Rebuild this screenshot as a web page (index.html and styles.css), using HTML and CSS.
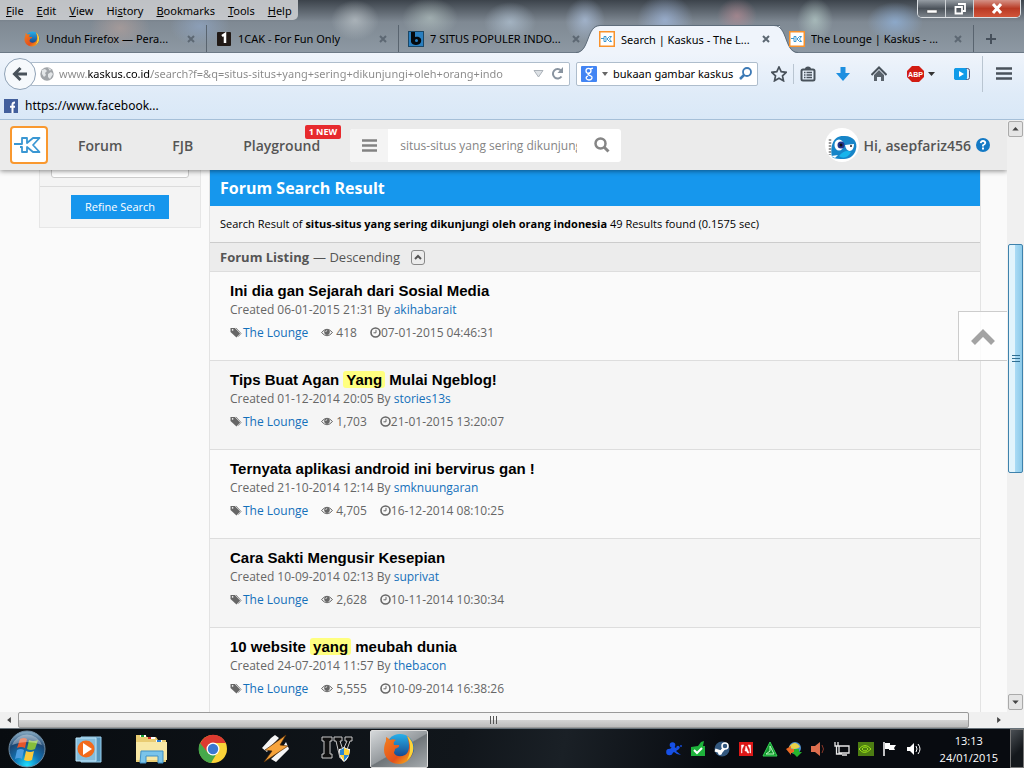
FILE: index.html
```html
<!DOCTYPE html>
<html lang="id">
<head>
<meta charset="utf-8">
<title>Search | Kaskus - The Largest Indonesian Community</title>
<meta name="viewport" content="width=device-width, initial-scale=1">
<link rel="stylesheet" href="styles.css">
</head>
<body>
<svg class="symbols" aria-hidden="true">
  <defs>
    <linearGradient id="ff-globe" x1="0" y1="0" x2="0" y2="1"><stop offset="0" stop-color="#27b0ea"/><stop offset="1" stop-color="#152f78"/></linearGradient>
    <linearGradient id="ff-fox" x1="0" y1="0" x2="1" y2="1"><stop offset="0" stop-color="#f58220"/><stop offset=".6" stop-color="#e4501b"/><stop offset="1" stop-color="#f9c61c"/></linearGradient>
    <radialGradient id="orb" cx=".5" cy=".95" r=".9"><stop offset="0" stop-color="#1fe0ff"/><stop offset=".4" stop-color="#1173b4"/><stop offset=".75" stop-color="#1c4672"/><stop offset="1" stop-color="#7fa3bd"/></radialGradient>
  </defs>
  <symbol id="i-firefox" viewBox="0 0 32 32">
    <circle cx="17" cy="15" r="14" fill="url(#ff-globe)"/>
    <path d="M24 3c5 4 7 9 6 15-1 7-7 13-14 13C8 31 1 25 1 17c0-4 1-7 2-9V4c2 1 3 2 4 3 2-1 4-1 6 0-2 1-3 3-2 5h5c1 2-2 3-4 4 0 2-1 2-1 4 2 4 7 4 11 2 5-3 5-11 2-19z" fill="url(#ff-fox)"/>
    <path d="M24 3c5 4 7 9 6 15-1 4-3 7-6 9 4-7 4-17 0-24z" fill="#fbd63a"/>
  </symbol>
  <symbol id="i-kaskus" viewBox="0 0 38 38">
    <rect x="1" y="1" width="36" height="36" rx="3" fill="#fff" stroke="#f9982f" stroke-width="2"/>
    <path d="M4 18h8v-6h5v5l6-5h6.500L23 19l6.500 7H23l-6-5v5h-5v-5h-2" fill="none" stroke="#3a97d3" stroke-width="1.800" stroke-linejoin="round"/>
  </symbol>
  <symbol id="i-kaskus-small" viewBox="0 0 16 16">
    <rect x=".75" y=".75" width="14.500" height="14.500" fill="#fff" stroke="#f9922b" stroke-width="1.500"/>
    <path d="M2 7.500h3M5 5.500h2v5H5zM12.500 5.500h-2L8 8l2.500 2.500h2L10.500 8z" fill="none" stroke="#3a97d3"/>
  </symbol>
  <symbol id="i-close" viewBox="0 0 8 8"><path d="M1 1l6 6M7 1L1 7" stroke="#5d6873" stroke-width="2"/></symbol>
  <symbol id="i-tag" viewBox="0 0 12 12"><path d="M0 1h4.800L10.500 7 6.500 11.500 0 5.500z" fill="#666"/><path d="M6 1l5.500 6-3 3.500" fill="none" stroke="#666" stroke-width=".8"/><circle cx="2.300" cy="3.200" r=".9" fill="#f9f9f9"/></symbol>
  <symbol id="i-eye" viewBox="0 0 12 10"><path d="M.5 5Q6-1.500 11.500 5 6 11.500.5 5z" fill="none" stroke="#666"/><circle cx="6" cy="4.600" r="2.800" fill="#666"/><path d="M4.700 4.500Q4.800 3 6.200 3" fill="none" stroke="#fff" stroke-width=".7"/></symbol>
  <symbol id="i-clock" viewBox="0 0 11 11"><circle cx="5.500" cy="5.500" r="4.500" fill="none" stroke="#666" stroke-width="1.600"/><path d="M6 2.800v3H3.500" fill="none" stroke="#666"/></symbol>
  <symbol id="i-up" viewBox="0 0 8 5"><path d="M4 0l4 4.500H0z" fill="#444"/></symbol>
</svg>

<div class="window">
  <header class="chrome">
    <div class="titlebar">
      <nav class="menu" aria-label="Menu bar">
        <button><u>F</u>ile</button><button><u>E</u>dit</button><button><u>V</u>iew</button><button>Hi<u>s</u>tory</button><button><u>B</u>ookmarks</button><button><u>T</u>ools</button><button><u>H</u>elp</button>
      </nav>
      <div class="controls">
        <button aria-label="Minimize"><svg width="12" height="12" viewBox="0 0 12 12"><rect x="1" y="7" width="10" height="3" fill="#fff" stroke="#555" stroke-width=".5"/></svg></button>
        <button aria-label="Restore"><svg width="12" height="12" viewBox="0 0 12 12"><path d="M4 1h7v7H9M1.500 4h6.500v6.500H1.500z" fill="none" stroke="#fff" stroke-width="1.800"/></svg></button>
        <button class="controls-close" aria-label="Close"><svg width="12" height="11" viewBox="0 0 12 11"><path d="M2 1l8 9M10 1L2 10" stroke="#fff" stroke-width="3"/></svg></button>
      </div>
    </div>
    <div class="tabs" role="tablist">
      <div class="tab tab-first" role="tab"><svg class="fav"><use href="#i-firefox"/></svg><span>Unduh Firefox — Pera...</span><button aria-label="Close tab"><svg><use href="#i-close"/></svg></button></div>
      <div class="tab" role="tab"><svg class="fav" viewBox="0 0 16 16"><rect x="1" y="1" width="14" height="14" rx="1" fill="#211915"/><path d="M6 5l3-2v9" fill="none" stroke="#fff" stroke-width="2.500"/></svg><span>1CAK - For Fun Only</span><button aria-label="Close tab"><svg><use href="#i-close"/></svg></button></div>
      <div class="tab tab-open" role="tab"><svg class="fav" viewBox="0 0 16 16"><rect width="16" height="16" fill="#1c4766"/><rect x="1" y="1" width="14" height="14" fill="#2a7fc0"/><path d="M3 1h4v5c5-1 7 2 6 5-1 4-9 4-10 0z" fill="#05090d"/><circle cx="8.500" cy="9.500" r="1.500" fill="#2a7fc0"/></svg><span>7 SITUS POPULER INDO...</span><button aria-label="Close tab"><svg><use href="#i-close"/></svg></button></div>
      <div class="tab tab-active" role="tab" aria-selected="true">
        <svg class="curve curve-left" viewBox="0 0 24 28"><path d="M0 28C14 28 10 1 24 1V28z" fill="#eff4fb"/><path d="M0 27.500C14 27 10 .5 24 .5" fill="none" stroke="#5f6d7b"/></svg>
        <svg class="fav"><use href="#i-kaskus-small"/></svg><span>Search | Kaskus - The L...</span><button aria-label="Close tab"><svg><use href="#i-close"/></svg></button>
        <svg class="curve curve-right" viewBox="0 0 24 28"><path d="M24 28C10 28 14 1 0 1V28z" fill="#eff4fb"/><path d="M24 27.500C10 27 14 .5 0 .5" fill="none" stroke="#5f6d7b"/></svg>
      </div>
      <div class="tab tab-last" role="tab"><svg class="fav"><use href="#i-kaskus-small"/></svg><span>The Lounge | Kaskus - ...</span><button aria-label="Close tab"><svg><use href="#i-close"/></svg></button></div>
      <button class="newtab" aria-label="New tab"><svg width="12" height="12" viewBox="0 0 12 12"><path d="M6 1v10M1 6h10" stroke="#46505b" stroke-width="2"/></svg></button>
    </div>
    <div class="toolbar">
      <button class="back" aria-label="Back"><svg width="16" height="16" viewBox="0 0 16 16"><path d="M15 8H3M8.500 2L2.500 8l6 6" fill="none" stroke="#49525b" stroke-width="3"/></svg></button>
      <div class="field url">
        <svg width="14" height="14" viewBox="0 0 14 14"><circle cx="7" cy="7" r="6.700" fill="#a0a4a8"/><path d="M2 3l3-1 2 2-2 2 1 2-2 2-2-3zM8 7l3-2 2 2-3 5-2-2zM8 1l3 1-1 2z" fill="#e3e6e8"/></svg>
        <input class="url-input" aria-label="Address" value="www.kaskus.co.id/search?f=&amp;q=situs-situs+yang+sering+dikunjungi+oleh+orang+indo">
        <svg width="11" height="8" viewBox="0 0 11 8"><path d="M1 .5h9L5.500 7z" fill="#dde1e5" stroke="#aab1b8"/></svg>
        <button aria-label="Reload"><svg width="13" height="13" viewBox="0 0 13 13"><path d="M10.500 9.500A4.700 4.700 0 1 1 10 3.500" fill="none" stroke="#8994a0" stroke-width="2"/><path d="M12 0v6H6.500z" fill="#8994a0"/></svg></button>
      </div>
      <div class="field find">
        <svg width="16" height="16" viewBox="0 0 16 16"><rect width="16" height="16" rx="1" fill="#4285f4"/><g fill="none" stroke="#fff" stroke-width="1.300"><circle cx="7.500" cy="4.800" r="2.500"/><path d="M9 3l3-.8M9 7c-4 1-1 2 1 3s1 4-2 4-4-3-1-4"/></g></svg>
        <svg width="6" height="4" viewBox="0 0 6 4"><path d="M0 0h6L3 4z" fill="#666"/></svg>
        <input aria-label="Search" value="bukaan gambar kaskus">
        <button aria-label="Go"><svg width="13" height="13" viewBox="0 0 13 13"><circle cx="8" cy="5" r="4" fill="none" stroke="#3c79b5" stroke-width="1.800"/><path d="M5 8L1 12" stroke="#3c79b5" stroke-width="2.500"/></svg></button>
      </div>
      <div class="tools">
        <button aria-label="Bookmark"><svg width="16" height="16" viewBox="0 0 16 16"><path d="M8 1l2.200 4.700 5 .6-3.700 3.500 1 5L8 12.300l-4.500 2.500 1-5L.8 6.300l5-.6z" fill="none" stroke="#49525b" stroke-width="1.700"/></svg></button>
        <button class="ruled list" aria-label="Bookmarks menu"><svg width="16" height="16" viewBox="0 0 16 16"><rect x="1.500" y="3.500" width="13" height="11" rx="1.500" fill="none" stroke="#49525b" stroke-width="2"/><path d="M5 3a3 2.500 0 0 1 6 0z" fill="#49525b"/><path d="M4 6.500h1.500M4 9h1.500M4 11.500h1.500M6.500 6.500H12M6.500 9H12M6.500 11.500H12" stroke="#49525b" stroke-width="1.300"/></svg></button>
        <button aria-label="Downloads"><svg width="16" height="16" viewBox="0 0 16 16"><path d="M5.500 1h5v6H15l-7 8-7-8h4.500z" fill="#1d8fe0"/></svg></button>
        <button aria-label="Home"><svg width="16" height="16" viewBox="0 0 16 16"><path d="M.5 9L8 1.500 15.500 9" fill="none" stroke="#49525b" stroke-width="2"/><path d="M3 9l5-5 5 5v6h-3v-4H6v4H3z" fill="#59626b"/></svg></button>
        <button class="abp" aria-label="Adblock Plus"><svg width="17" height="16" viewBox="0 0 17 16"><path d="M5 0h7l5 5v6l-5 5H5l-5-5V5z" fill="#d21c12"/><text x="8.500" y="11" text-anchor="middle" class="abp-text">ABP</text></svg><svg width="7" height="4" viewBox="0 0 7 4"><path d="M0 0h7L3.500 4z" fill="#333"/></svg></button>
        <button aria-label="Video"><svg width="16" height="12" viewBox="0 0 16 12"><rect x=".5" y=".5" width="15" height="11" rx="2" fill="#dcecf8" stroke="#557"/><rect width="13" height="12" rx="2" fill="#109be9"/><path d="M5 3l5 3-5 3z" fill="#fff"/></svg></button>
        <button class="ruled app" aria-label="Open menu"><svg width="16" height="13" viewBox="0 0 16 13"><path d="M0 1.500h16M0 6.500h16M0 11.500h16" stroke="#49525b" stroke-width="2.400"/></svg></button>
      </div>
    </div>
    <div class="bookmarks"><a href="#"><svg width="14" height="14" viewBox="0 0 14 14"><rect width="14" height="14" fill="#425f9c"/><path d="M8.500 14V5.500c0-1.500.8-2 2.500-2M6 7.800h5" fill="none" stroke="#fff" stroke-width="2"/></svg>https://www.facebook...</a></div>
  </header>

  <div class="viewport">
    <div class="page">
      <header class="site">
        <a class="logo" href="#" aria-label="Kaskus"><svg width="38" height="38"><use href="#i-kaskus"/></svg></a>
        <nav class="site-nav"><a href="#">Forum</a><a href="#">FJB</a><a href="#">Playground<span class="badge">1 NEW</span></a></nav>
        <form class="search">
          <button class="cats" type="button" aria-label="Categories"><svg width="15" height="13" viewBox="0 0 15 13"><path d="M0 1.500h15M0 6.500h15M0 11.500h15" stroke="#828282" stroke-width="2.500"/></svg></button>
          <input aria-label="Search Kaskus" value="situs-situs yang sering dikunjungi oleh orang indonesia">
          <button class="go" type="button" aria-label="Search"><svg width="16" height="16" viewBox="0 0 16 16"><circle cx="6.500" cy="6.500" r="5" fill="none" stroke="#858585" stroke-width="2.500"/><path d="M10.500 10.500l4 4" stroke="#858585" stroke-width="3"/></svg></button>
        </form>
        <a class="user" href="#">
          <svg width="34" height="34" viewBox="0 0 34 34"><circle cx="17" cy="17" r="17" fill="#fff"/><path d="M5 11v16" stroke="#999" stroke-width="2.500" stroke-dasharray="2 1"/><path d="M7 29C5 18 8 8 18 8c10-1 15 6 13 13-1 6-6 10-12 10-5 0-9 0-12-2z" fill="#1785c8"/><path d="M14 28c4-5 8-6 12-4-3 6-8 7-12 4z" fill="#17b4ec"/><ellipse cx="14" cy="17" rx="4.500" ry="5.500" fill="#fff"/><circle cx="16" cy="17" r="3.500" fill="#24338a"/><circle cx="16" cy="17" r="1.500" fill="#111"/><path d="M20 17l9-1c0 9-8 9-9 1z" fill="#fff"/><circle cx="26" cy="18" r="1" fill="#222"/><path d="M6 28l7-1-3 3z" fill="#fff"/></svg>
          <span>Hi, asepfariz456</span>
          <svg width="14" height="14" viewBox="0 0 14 14"><circle cx="7" cy="7" r="7" fill="#1379c4"/><path d="M4.700 5.200Q5 3 7 3t2.300 2Q9.200 6.200 7 7.300v1.200" fill="none" stroke="#fff" stroke-width="1.800"/><rect x="6" y="9.500" width="2" height="2" fill="#fff"/></svg>
        </a>
      </header>

      <div class="columns">
        <aside class="filter">
          <div class="filter-field"><input aria-label="Keyword" value="situs-situs yang sering dikunjungi oleh orang"></div>
          <div class="filter-action"><button>Refine Search</button></div>
        </aside>
        <main class="results">
          <h1>Forum Search Result</h1>
          <p class="summary">Search Result of <b>situs-situs yang sering dikunjungi oleh orang indonesia</b> 49 Results found (0.1575 sec)</p>
          <div class="listing"><b>Forum Listing</b> — Descending <button aria-label="Sort ascending"><svg width="8" height="6" viewBox="0 0 8 6"><path d="M1 5l3-3 3 3" fill="none" stroke="#555" stroke-width="2"/></svg></button></div>
          <article><h2><a href="#">Ini dia gan Sejarah dari Sosial Media</a></h2><p>Created 06-01-2015 21:31 By <a href="#">akihabarait</a></p><p class="meta"><span class="room"><svg><use href="#i-tag"/></svg><a href="#">The Lounge</a></span><span class="views"><svg><use href="#i-eye"/></svg>418</span><span class="time"><svg><use href="#i-clock"/></svg>07-01-2015 04:46:31</span></p></article>
          <article><h2><a href="#">Tips Buat Agan <mark>Yang</mark> Mulai Ngeblog!</a></h2><p>Created 01-12-2014 20:05 By <a href="#">stories13s</a></p><p class="meta"><span class="room"><svg><use href="#i-tag"/></svg><a href="#">The Lounge</a></span><span class="views"><svg><use href="#i-eye"/></svg>1,703</span><span class="time"><svg><use href="#i-clock"/></svg>21-01-2015 13:20:07</span></p></article>
          <article><h2><a href="#">Ternyata aplikasi android ini bervirus gan !</a></h2><p>Created 21-10-2014 12:14 By <a href="#">smknuungaran</a></p><p class="meta"><span class="room"><svg><use href="#i-tag"/></svg><a href="#">The Lounge</a></span><span class="views"><svg><use href="#i-eye"/></svg>4,705</span><span class="time"><svg><use href="#i-clock"/></svg>16-12-2014 08:10:25</span></p></article>
          <article><h2><a href="#">Cara Sakti Mengusir Kesepian</a></h2><p>Created 10-09-2014 02:13 By <a href="#">suprivat</a></p><p class="meta"><span class="room"><svg><use href="#i-tag"/></svg><a href="#">The Lounge</a></span><span class="views"><svg><use href="#i-eye"/></svg>2,628</span><span class="time"><svg><use href="#i-clock"/></svg>10-11-2014 10:30:34</span></p></article>
          <article><h2><a href="#">10 website <mark>yang</mark> meubah dunia</a></h2><p>Created 24-07-2014 11:57 By <a href="#">thebacon</a></p><p class="meta"><span class="room"><svg><use href="#i-tag"/></svg><a href="#">The Lounge</a></span><span class="views"><svg><use href="#i-eye"/></svg>5,555</span><span class="time"><svg><use href="#i-clock"/></svg>10-09-2014 16:38:26</span></p></article>
        </main>
      </div>
      <button class="totop" aria-label="Back to top"><svg width="26" height="17" viewBox="0 0 26 17"><path d="M3 15L13 5l10 10" fill="none" stroke="#a3a3a3" stroke-width="5.500"/></svg></button>
    </div>
    <div class="vscroll">
      <button aria-label="Scroll up"><svg><use href="#i-up"/></svg></button>
      <div class="vthumb"><svg width="8" height="9" viewBox="0 0 8 9"><path d="M0 1.500h8M0 4.500h8M0 7.500h8" stroke="#2f6f92"/></svg></div>
      <button class="down" aria-label="Scroll down"><svg><use href="#i-up"/></svg></button>
    </div>
  </div>
  <div class="hscroll">
    <button aria-label="Scroll left"><svg width="4" height="6" viewBox="0 0 5 8"><path d="M5 0v8L0 4z" fill="#444"/></svg></button>
    <div class="hthumb"><svg width="9" height="8" viewBox="0 0 9 8"><path d="M1.500 0v8M4.500 0v8M7.500 0v8" stroke="#555"/></svg></div>
    <button aria-label="Scroll right"><svg width="4" height="6" viewBox="0 0 5 8"><path d="M0 0v8l5-4z" fill="#444"/></svg></button>
  </div>

  <footer class="taskbar">
    <button class="start" aria-label="Start"><svg width="38" height="38" viewBox="0 0 38 38"><circle cx="19" cy="19" r="18" fill="url(#orb)" stroke="#6f8ca3"/><path d="M12 9q4-2 7 0l-2 9q-4-2-8 0z" fill="#e5562a"/><path d="M21 10q4 2 9 0l-3 9q-4 2-8 0z" fill="#86bf3c"/><path d="M9 20q4-2 7 0l-2 9q-3-2-7 0z" fill="#4b9de0"/><path d="M18 21q4 2 8 0l-2 9q-4 2-8 0z" fill="#fbc93b"/><path d="M4 15a16 16 0 0 1 30 0Q19 9 4 15z" fill="#fff" opacity=".35"/></svg></button>
    <button class="app-btn" aria-label="Media Player"><svg width="32" height="32" viewBox="0 0 32 32"><path d="M8 4h20v25H8z" fill="#5797bd" stroke="#9bd0ef"/><path d="M3 5h20v23H3z" fill="#85bedd" stroke="#c0e5f8"/><circle cx="13" cy="16" r="8.500" fill="#f26a1b"/><path d="M10 10l9 6-9 6z" fill="#fff"/></svg></button>
    <button class="app-btn" aria-label="Explorer"><svg width="32" height="32" viewBox="0 0 32 32"><path d="M1 2h8l3 2h9l2 3h8v22H1z" fill="#e9cc72"/><path d="M5 3h6M14 5h6M21 8h6" stroke="#fff" stroke-width="2"/><path d="M6 3h3" stroke="#18a038" stroke-width="2"/><path d="M13 5h3" stroke="#d3322b" stroke-width="2"/><path d="M22 8h4" stroke="#2b7dd3" stroke-width="2"/><path d="M1 9h31v18H1z" fill="#f8e8a5"/><path d="M6 18h22v12h-5v-7H11v7H5z" fill="#7ac4ea" stroke="#4190c4"/></svg></button>
    <button class="app-btn" aria-label="Chrome"><svg width="32" height="32" viewBox="0 0 32 32"><circle cx="16" cy="16" r="14" fill="#fbd338"/><path d="M3 11A14 14 0 0 1 29 10H16l-6 9z" fill="#dd3a30"/><path d="M3 10a14 14 0 0 0 11 20l6-10-9 0z" fill="#46a84b"/><circle cx="16" cy="16" r="6.500" fill="#fff"/><circle cx="16" cy="16" r="5.200" fill="#3b78d0"/></svg></button>
    <button class="app-btn" aria-label="Winamp"><svg width="32" height="32" viewBox="0 0 32 32"><path d="M12 5l4-3 4 3-9 9-3 5-5-4zM27 9l3 7-13 13-5-3 9-8z" fill="#f6f6f6"/><path d="M27 2L6 17l7 1-8 11L29 13l-8-1z" fill="#f7a43b" stroke="#5a3008" stroke-width=".7"/></svg></button>
    <button class="app-btn" aria-label="GTA IV"><svg width="32" height="32" viewBox="0 0 32 32"><path d="M1 4h10v4H9v13h2v4H1v-4h2V8H1zM13 4h8v4h-2l3 9 4-9h-2V4h7v4h-2l-6 17h-4L15 8h-2z" fill="#111" stroke="#c9c9c9"/><path d="M18 16q3 0 5-2 3 2 6 2 0 9-6 13-5-4-5-13z" fill="#fff"/><path d="M19 17l4-2v7h-4zM23 22h5l-5 6z" fill="#2887d3"/><path d="M23 15l5 2v5h-5zM19 22h4v6z" fill="#ffd437"/></svg></button>
    <button class="app-btn app-current" aria-label="Firefox"><svg width="32" height="32"><use href="#i-firefox"/></svg></button>
    <div class="tray">
      <svg viewBox="0 0 16 16"><g fill="#1650e6"><circle cx="3.500" cy="11" r="3.300"/><circle cx="6.500" cy="4" r="2.800"/><circle cx="12" cy="6.500" r="1.700"/><circle cx="15" cy="5" r=".9"/><path d="M3 9l4-4 3 2 3 1-3 2 5 4q-4 0-7-3l-3 2z"/></g></svg>
      <svg viewBox="0 0 16 16"><path d="M1 6l7-1 3-4 3-1-1 5h2v10H1z" fill="#1eb23b"/><path d="M4 9l3 3 5-5" fill="none" stroke="#fff" stroke-width="2"/></svg>
      <svg viewBox="0 0 16 16"><circle cx="8" cy="8" r="7.500" fill="#32577e"/><path d="M1 9l6 2 4-5" stroke="#fff" stroke-width="3" fill="none"/><circle cx="11" cy="5" r="3" fill="#32577e" stroke="#fff" stroke-width="1.500"/><circle cx="6" cy="12" r="2" fill="#fff"/></svg>
      <svg viewBox="0 0 16 16"><rect x="1" y="1" width="14" height="14" fill="#dc1717"/><path d="M3.500 4H6L4 8v4h-.5zM12.500 4H10l2 4v4h.5zM8 5l3 7H9.500l-1-2H7z" fill="#fff" stroke="#fff" stroke-width=".5"/></svg>
      <svg viewBox="0 0 16 16"><path d="M8 1l7 14H1z" fill="#11952d" stroke="#36d255"/><path d="M8 5l4 8H4l4-3z" fill="none" stroke="#b7f7bc"/></svg>
      <svg viewBox="0 0 16 16"><circle cx="9" cy="7" r="6" fill="#4e91cf"/><path d="M3 6q6-8 11 0-6 4-11 0z" fill="#e9d147"/><path d="M0 8l5-3v3h5v4H5v2z" fill="#ed6a24"/><path d="M8 8h5v3h3l-5 5-5-5h2z" fill="#26b52e"/></svg>
      <svg viewBox="0 0 16 16"><path d="M1 5h4l5-4v14l-5-4H1z" fill="#dd6f4f"/><path d="M12 4q3 4 0 8" fill="none" stroke="#8b3727"/></svg>
      <svg viewBox="0 0 16 16"><path d="M5 5h10v7H5zM8 14h5M1 1v4h3V1M2.500 5v8H8" fill="none" stroke="#e8e8e8" stroke-width="1.300"/></svg>
      <svg viewBox="0 0 16 16"><rect x="0" y="1" width="16" height="14" fill="#4d7d12"/><path d="M1 8q6-7 12 0-7 7-12 0zm3 0q3-4 6 0-3 4-6 0" fill="none" stroke="#9be018"/></svg>
      <svg viewBox="0 0 16 16"><path d="M2 1v14" stroke="#fff" stroke-width="1.500"/><path d="M3 2h5v2h6l-2 3 1 2H7V8H3z" fill="#fff"/></svg>
      <svg viewBox="0 0 16 16"><path d="M1 6h3l4-4v12l-4-4H1z" fill="#fff"/><path d="M10 5q2 3 0 6M12 3q4 5 0 10" fill="none" stroke="#fff"/></svg>
    </div>
    <time class="clock" datetime="2015-01-24T13:13">13:13<br>24/01/2015</time>
    <button class="peek" aria-label="Show desktop"></button>
  </footer>
</div>
</body>
</html>
```
FILE: styles.css
```css
* { box-sizing: border-box; }
body { margin: 0; font-family: "Open Sans", "Noto Sans", sans-serif; font-size: 12px; color: #666; }
button { margin: 0; padding: 0; border: 0; background: none; font: inherit; color: inherit; }
input { min-width: 0; border: 0; padding: 0; background: none; font: inherit; outline: 0; }
a { color: #1470ba; text-decoration: none; }
h1, h2, p { margin: 0; }
svg { flex: none; }
.symbols { position: absolute; width: 0; height: 0; }
.window { display: flex; flex-direction: column; height: 100vh; overflow: hidden; }

/* Browser frame */
.chrome { flex: none; color: #000; border-bottom: 1px solid #a5bfd8; font-family: "Noto Sans", sans-serif; font-size: 11px;
  background:
    radial-gradient(ellipse 30px 22px at 120px 28px, #b9a29b99, transparent),
    radial-gradient(ellipse 30px 20px at 200px 26px, #91a8c8aa, transparent),
    radial-gradient(ellipse 24px 20px at 355px 20px, #c0c8ccaa, transparent),
    radial-gradient(ellipse 28px 20px at 430px 18px, #b5c4c2aa, transparent),
    radial-gradient(ellipse 26px 20px at 510px 22px, #b5c7d8aa, transparent),
    radial-gradient(ellipse 20px 22px at 585px 20px, #b2c7e5aa, transparent),
    radial-gradient(ellipse 28px 26px at 665px 20px, #a6bfe7aa, transparent),
    radial-gradient(ellipse 20px 18px at 737px 16px, #b98c94aa, transparent),
    radial-gradient(ellipse 18px 22px at 815px 20px, #b5cac7bb, transparent),
    radial-gradient(ellipse 28px 20px at 895px 22px, #91b3dcbb, transparent),
    linear-gradient(#3c434b, #7f8993 22px, #8d98a3 52px); }
.titlebar { display: flex; justify-content: space-between; align-items: flex-start; height: 25px; }
.menu { display: flex; gap: 13px; height: 20px; padding: 0 6px; align-items: center; border-radius: 0 0 5px 0; background: #c8cbceee; }
.controls { display: flex; height: 18px; margin-right: 3px; border: 1px solid #dce0e4; border-top: 0; border-radius: 0 0 5px 5px; overflow: hidden; }
.controls button { display: grid; place-items: center; width: 28px; background: linear-gradient(#969da4, #4c535b 50%, #7c838a); border-right: 1px solid #cdd1d5; }
.controls .controls-close { width: 46px; border: 0; background: linear-gradient(#d59286, #b93a24 50%, #d1553a); }
.tabs { display: flex; height: 28px; border-bottom: 1px solid #6c7986; }
.tab { position: relative; display: flex; flex: 1 1 192px; align-items: center; min-width: 0; padding: 0 11px 0 9px; border-right: 1px solid #59646f; }
.tab-first { flex-basis: 207px; padding-left: 24px; }
.tab-open { flex-basis: 189px; padding-right: 8px; border-right: 0; }
.tab-active { z-index: 1; flex-basis: 181px; margin: 0 9px -1px 11px; padding: 0 10px 0 0; border: 0; background: linear-gradient(#5f6d7b 1px, #eff4fb 1px); }
.tab-last { flex-basis: 185px; padding-left: 0; }
.tab span { flex: 1; overflow: hidden; white-space: nowrap; }
.tab button { display: flex; }
.tab button svg { width: 8px; height: 8px; }
.fav { width: 16px; height: 16px; margin-right: 6px; z-index: 1; }
.curve { position: absolute; bottom: 0; width: 24px; height: 28px; }
.curve-left { right: 100%; margin-right: -1px; }
.curve-right { left: 100%; margin-left: -6px; }
.newtab { flex: 0 0 50px; display: grid; place-items: center start; padding-left: 11px; }
.toolbar { display: flex; align-items: center; height: 41px; padding: 0 12px 0 4px; background: linear-gradient(#eff4fb, #dfebf8); }
.back { position: relative; z-index: 1; display: grid; place-items: center; width: 32px; height: 32px; margin-right: -6px; border: 1px solid #8fa2b6; border-radius: 50%; background: #f6f9fc; }
.field { display: flex; align-items: center; min-width: 0; height: 24px; border: 1px solid #aebdcc; border-radius: 2px; background: #fff; }
.field button { display: flex; }
.field input { flex: 1; }
.url { flex: 1 1 540px; gap: 5px; padding: 0 5px 0 9px; }
.url-input { background: linear-gradient(90deg, #888 28px, #000 28px, #000 92px, #888 92px); background-clip: text; -webkit-background-clip: text; color: transparent; }
.url > button { margin-left: 2px; }
.find { flex: 0 1 182px; gap: 5px; margin-left: 6px; padding: 0 5px 0 4px; }
.tools { flex: 0 0 241px; display: flex; align-items: center; justify-content: space-between; margin-left: 13px; }
.tools button { display: flex; align-items: center; }
.tools .ruled { height: 20px; margin-left: -8px; padding-left: 6px; border-left: 1px solid #b9c5d1; }
.tools .list { margin-left: -14px; }
.tools .app { height: 36px; padding-left: 13px; }
.abp { gap: 4px; }
.abp-text { font: bold 7px "Liberation Sans", sans-serif; fill: #fff; }
.bookmarks { height: 25px; padding: 4px; background: linear-gradient(#dfebf8, #d9e8f7); }
.bookmarks a { display: inline-flex; align-items: center; gap: 7px; color: #000; font-size: 12px; line-height: 16px; }

/* Web page */
.viewport { display: flex; flex: 1; min-height: 0; }
.page { position: relative; display: flex; flex-direction: column; flex: 1; min-width: 0; overflow: hidden; background: #fafafa; }
.site { position: relative; z-index: 2; display: flex; flex: none; align-items: center; height: 50px; padding: 0 17px 0 10px; background: #ebebeb; box-shadow: 0 1px 5px #0007; }
.logo { display: flex; }
.site-nav { display: flex; gap: 50px; margin-left: 30px; font-size: 14px; font-weight: 600; }
.site-nav a { position: relative; color: #555; }
.badge { position: absolute; right: -21px; top: -11px; padding: 0 4px; border-radius: 2px; background: #e72a2e; color: #fff; font-size: 9px; line-height: 14px; font-weight: 700; white-space: nowrap; }
.search { display: flex; width: 271px; height: 33px; margin-left: 30px; border-radius: 3px; overflow: hidden; background: #fff; }
.search button { display: grid; place-items: center; width: 38px; }
.search .cats { background: #f4f4f4; }
.search input { flex: 1; margin: 0 6px 0 12px; color: #858585; }
.user { display: flex; align-items: center; gap: 5px; margin-left: auto; color: #555; font-size: 14px; font-weight: 600; }
.columns { display: grid; grid-template-columns: 162px 1fr; gap: 8px; align-items: start; padding: 0 26px 0 39px; }
.filter { border: 1px solid #e6e6e6; border-top: 0; background: #f4f4f4; }
.filter-field { display: flex; align-items: flex-end; height: 17px; padding: 0 11px 8px; border-bottom: 1px solid #dcdcdc; overflow: hidden; }
.filter-field input { flex: 1; height: 34px; padding: 0 8px; border: 1px solid #ccc; border-radius: 3px; background: #fff; color: #777; }
.filter-action { padding: 8px; text-align: center; }
.filter-action button { padding: 0 14px; background: #1696ed; color: #fff; font-size: 11px; line-height: 24px; }
.results { border: solid #e3e3e3; border-width: 0 1px; }
.results h1 { padding: 0 10px; background: #1697ed; color: #fff; font-size: 16px; line-height: 36px; }
.summary { padding: 0 10px; background: #f4f4f4; color: #000; font-size: 11px; line-height: 36px; }
.listing { display: flex; align-items: center; height: 30px; padding: 0 10px; gap: 4px; border: solid #ccc; border-width: 1px 0; border-bottom-color: #ddd; background: #ececec; color: #555; font-size: 13px; }
.listing button { display: grid; place-items: center; width: 14px; height: 15px; margin-left: 7px; border: 1px solid #888; border-radius: 3px; }
.results article { padding: 9px 20px 19px; border-bottom: 1px solid #ddd; line-height: 17px; background: #fafafa; }
.results article:nth-of-type(even) { background: #f5f5f5; }
.results h2 { font: bold 15px/20px "Liberation Sans", Arial, sans-serif; }
.results h2 a { color: #000; }
mark { padding: 0 3px; border-radius: 3px; background: #ffff80; color: inherit; }
.meta { display: flex; gap: 13px; margin-top: 6px; }
.meta span { display: flex; align-items: center; }
.meta svg { width: 12px; height: 11px; }
.room svg { margin-right: 1px; }
.views svg { margin-right: 3px; }
.meta .time svg { width: 11px; }
.totop { position: absolute; z-index: 1; right: 0; top: 191px; display: grid; place-items: center; width: 49px; height: 50px; border: 1px solid #ccc; border-right: 0; background: #fffc; }

/* Scroll bars */
.vscroll { display: grid; grid-template-rows: 16px 107fr 230fr 221fr 16px; width: 17px; padding: 1px 1px 2px; background: #f0f0f0; }
.vscroll button { display: grid; place-items: center; border: 1px solid #aaa; border-radius: 2px; background: #e5e5e5; }
.vscroll button svg { width: 7px; height: 4px; }
.vthumb { display: grid; grid-row: 3; place-items: center; border: 1px solid #3e82ac; border-radius: 2px; background: linear-gradient(90deg, #e2f4fc 45%, #a8daf4 50%, #8ccae9); }
.vscroll .down { grid-row: 5; }
.down svg { transform: rotate(180deg); }
.hscroll { display: flex; flex: none; height: 16px; padding-right: 16px; background: #f0f0f0; }
.hscroll button { display: grid; place-items: center; width: 18px; }
.hthumb { display: grid; place-items: center; flex: 1; margin-right: 21px; border: 1px solid #999; border-radius: 2px; background: linear-gradient(#f4f4f4 48%, #d3d3d3 50%, #bbb); }

/* Taskbar */
.taskbar { display: flex; flex: none; align-items: center; height: 40px; padding-left: 8px; border-top: 1px solid #67727a; background: linear-gradient(100deg, #080c10, #11161b 45%, #1a2026 55%, #080b10 70%); color: #fff; }
.start { display: flex; margin-right: 14px; }
.app-btn { display: grid; place-items: center; width: 58px; height: 38px; margin-right: 4px; }
.app-current { border: 1px solid #ddd; border-radius: 2px; background: linear-gradient(150deg, #d5d8da, #959a9e 50%, #6f7579 52%, #a5aaad); }
.tray { display: flex; gap: 8px; margin-left: auto; }
.tray svg { width: 16px; height: 16px; }
.clock { margin-left: 18px; text-align: center; font-size: 11px; line-height: 17px; }
.peek { align-self: stretch; width: 14px; margin-left: 12px; border: 1px solid #777; background: linear-gradient(135deg, #4a4f54, #14181c 60%); }
```
